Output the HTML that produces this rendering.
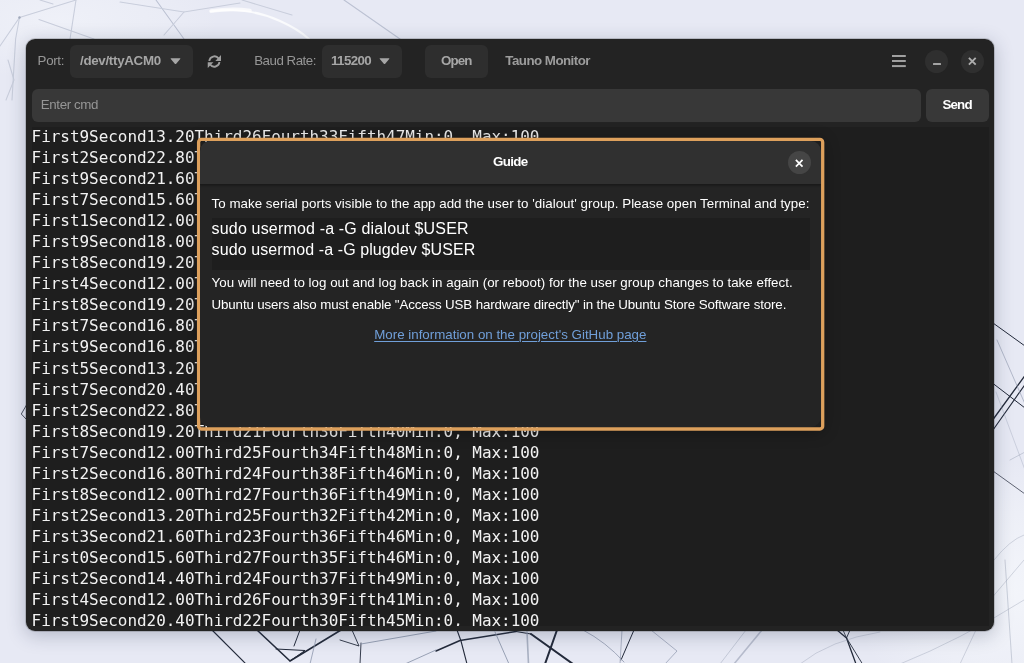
<!DOCTYPE html>
<html lang="en"><head><meta charset="utf-8"><title>Tauno Monitor</title>
<style>
html,body{margin:0;padding:0}
body{width:1024px;height:663px;overflow:hidden;position:relative;background:#e7e9f4;font-family:"Liberation Sans",sans-serif;font-size:13.33px;color:#fff}
#bg{position:absolute;left:0;top:0;width:1024px;height:663px}
#L{position:absolute;left:0;top:0;width:1024px;height:663px;will-change:transform}
#win{position:absolute;left:26px;top:39px;width:968px;height:592.4px;background:#232323;border-radius:9px;box-shadow:0 0 0 1px rgba(0,0,0,.16),0 4px 18px 1px rgba(40,50,85,.25)}
.t{position:absolute;white-space:pre;line-height:16px;height:16px}
.dim{color:#969696}
.btn{position:absolute;background:#2e2e2e;border-radius:6px}
.b{font-weight:700}
.hb{color:#a6a6a6}
svg.i{position:absolute;overflow:visible}
#tv{position:absolute;left:32px;top:127px;width:956.7px;height:498.6px;background:#1e1e1e;overflow:hidden;font-family:"DejaVu Sans Mono","Liberation Mono",monospace;font-size:16px;line-height:21.05px;color:#f2f2f2;letter-spacing:-0.045px}
#tv .in{position:absolute;left:-0.8px;top:-0.9px;transform:scaleY(1.04);transform-origin:0 0}
#tv .in div{white-space:pre;height:20.27px;line-height:20.27px}
#ring{position:absolute;left:199px;top:140px;width:623px;height:288px;border-radius:6px;box-shadow:0 2px 16px 2px rgba(0,0,0,.33)}
#dlg{position:absolute;left:200.2px;top:141px;width:620.6px;height:286.4px;background:#242424;border-radius:10px;overflow:hidden}
#dh{position:absolute;left:0;top:0;width:100%;height:43px;background:#303030;box-shadow:0 1px 0 #1a1a1a,0 2px 1.5px rgba(0,0,0,.25)}
.code{position:absolute;background:#1e1e1e}
.circ{position:absolute;border-radius:50%}
a{color:#709fd9;text-decoration:underline;text-decoration-thickness:1.4px;text-underline-offset:1.5px}

</style></head>
<body>
<svg id="bg" viewBox="0 0 1024 663">
<defs><filter id="bl" x="-5%" y="-5%" width="110%" height="110%"><feGaussianBlur stdDeviation="0.7"/></filter><radialGradient id="wb" cx="0.5" cy="0.5" r="0.5"><stop offset="0" stop-color="#f6f8fc" stop-opacity=".85"/><stop offset="0.6" stop-color="#f3f5fa" stop-opacity=".5"/><stop offset="1" stop-color="#f3f5fa" stop-opacity="0"/></radialGradient><radialGradient id="hl" cx="0.5" cy="0.5" r="0.5"><stop offset="0" stop-color="#fff" stop-opacity=".75"/><stop offset="1" stop-color="#fff" stop-opacity="0"/></radialGradient>
<linearGradient id="br" x1="0" y1="0" x2="1" y2="1"><stop offset="0" stop-color="#e7e9f4"/><stop offset="1" stop-color="#dfe4ee"/></linearGradient></defs>
<rect width="1024" height="663" fill="#e7e9f4"/>
<ellipse cx="1000" cy="590" rx="150" ry="130" fill="url(#wb)"/>
<ellipse cx="60" cy="20" rx="160" ry="60" fill="url(#wb)" opacity=".6"/>
<!-- top faint lines -->
<g fill="none" stroke="#c9cedc" stroke-width="1.1" stroke-linecap="round" filter="url(#bl)">
<path d="M19.5 17.5 L76 0"/><path d="M19.5 17.5 L15.6 39 L12 100"/><path d="M39 19.5 L94 39"/><path d="M76 0 L70 39"/><path d="M53 4 L40 0"/>
<path d="M156 0 L184 39" stroke="#bcc2d3"/><path d="M184 12 L164 35"/><path d="M120 2 L184 12 L240 3"/>
<path d="M344 0 L400 39" stroke="#bcc2d3"/><path d="M242 0 L292 15"/><path d="M0 46 L19.5 17.5"/><path d="M8 60 L14 80 L6 100"/>
</g>
<g filter="url(#bl)"><path d="M211 11.5 Q246 6 280 21 Q298 29 309 39" fill="none" stroke="#fff" stroke-width="2.2" opacity=".8" stroke-linecap="round"/>
<path d="M211 11 Q232 8 250 10.5" fill="none" stroke="#fff" stroke-width="3.6" opacity=".75" stroke-linecap="round"/></g>
<circle cx="19.5" cy="17.5" r="1.2" fill="#a0a8ba"/>
<!-- left tick -->
<path d="M26.5 405 L21.3 414 L26.5 419.5" fill="none" stroke="#232a3a" stroke-width="1" opacity=".8"/>
<!-- bottom dark lines -->
<g fill="none" stroke="#232a3a" stroke-linecap="round" stroke-linejoin="round">
<path d="M212 630 L246 664" stroke-width="1.1"/>
<path d="M257 630 L290 661 L341 630" stroke-width="1.6"/>
<path d="M276 649 L305 650.5 L290 661" stroke-width="1"/>
<path d="M300 630 L294 646" stroke-width="1"/>
<path d="M340 640 L359 646 L352 630" stroke-width="0.9"/>
<path d="M361 643 L360 664" stroke-width="0.9"/>
<path d="M436 651 L460 640.5 L516 631.5" stroke-width="1.5"/>
<path d="M457 630 L461 641 L467 664" stroke-width="1.1"/>
<path d="M516 631.5 L531 634" stroke-width="1.2"/>
<path d="M531 634 L573 664" stroke-width="2"/>
<path d="M557 630 L545 664" stroke-width="2"/>
<path d="M634 630 L621 660" stroke-width="1"/>
<path d="M837 630 L846.5 638 L856 664" stroke-width="1.3"/>
<path d="M850 630 L846.5 638 L862.5 664" stroke-width="0.9"/>
<path d="M843 630 L846.5 638" stroke-width="0.8"/>
</g>
<g fill="none" stroke="#8f98ad" stroke-linecap="round">
<path d="M316 639 L310 664" stroke-width="0.8"/>
<path d="M361 644 L436 631" stroke-width="0.9"/>
<path d="M405 664 L436 650" stroke-width="0.9"/>
<path d="M495 632 L509 664" stroke-width="0.9"/>
<path d="M527 632 L528.5 664" stroke-width="1.6" opacity=".7"/>
<path d="M583 630 Q606 642 624 662" stroke-width="0.8"/>
<path d="M622 630 L620 664" stroke-width="0.7"/>
<path d="M651 630 L677 651 L665 664" stroke-width="0.7"/>
<path d="M762 630 L734 664" stroke-width="1.6" opacity=".55"/>
<path d="M746 630 L720 664" stroke-width="1" opacity=".4"/>
<path d="M800 664 Q830 640 880 632" stroke-width="0.7" opacity=".5"/>
<path d="M900 664 Q960 640 1024 600" stroke-width="0.7" opacity=".5"/>
<path d="M960 664 L990 600 L1024 560" stroke-width="0.7" opacity=".5"/>
<path d="M1005 560 L1012 664" stroke-width="0.8" opacity=".5"/>
<path d="M994 560 Q1010 540 1024 535" stroke-width="0.7" opacity=".5"/>
</g>
<!-- right strip -->
<g fill="none" stroke="#232a3a" stroke-linecap="round">
<path d="M993 323 L1025 346" stroke-width="1"/>
<path d="M993 383.5 L1025 408" stroke-width="1"/>
<path d="M993 419.5 L1025 375.5" stroke-width="1.3"/>
<path d="M993 430 L1025 384.5" stroke-width="1.1"/>
<path d="M993 471 L1025 494" stroke-width="1" opacity=".7"/>
</g>
<g fill="none" stroke="#8f98ad" stroke-linecap="round">
<path d="M997 340 L1025 404" stroke-width="1" opacity=".6"/>
<path d="M996 392 L1025 470" stroke-width="0.8" opacity=".4"/>
<path d="M1010 460 L1025 452" stroke-width="0.8" opacity=".5"/>
</g>
</svg>
<div id="L">
<div id="win"></div>
<!-- header row -->
<span class="t dim" style="left:37.6px;top:52.6px;letter-spacing:-0.35px">Port:</span>
<div class="btn" style="left:70px;top:45px;width:122.5px;height:32.5px"></div>
<span class="t b hb" style="left:80px;top:52.6px;letter-spacing:-0.3px">/dev/ttyACM0</span>
<svg class="i" style="left:169.8px;top:58px" width="11" height="6.4" viewBox="0 0 11 6.4"><path d="M1.1 0.3 H9.9 Q10.9 0.3 10.2 1.1 L6.2 5.7 Q5.5 6.4 4.8 5.7 L0.8 1.1 Q0.1 0.3 1.1 0.3Z" fill="#a6a6a6"/></svg>
<svg class="i" style="left:200px;top:48px" width="30" height="28" viewBox="0 0 710 663"><g fill="none" stroke="#9e9e9e" stroke-width="44"><path d="M220 308 A122 122 0 0 1 440 248"/><path d="M460 332 A122 122 0 0 1 240 392"/></g><path d="M497 168 V305 H362Z" fill="#9e9e9e"/><path d="M183 472 V335 H318Z" fill="#9e9e9e"/></svg>
<span class="t dim" style="left:254.2px;top:52.6px;letter-spacing:-0.5px">Baud Rate:</span>
<div class="btn" style="left:321.7px;top:45px;width:80.3px;height:32.5px"></div>
<span class="t b hb" style="left:331px;top:52.6px;letter-spacing:-0.6px">115200</span>
<svg class="i" style="left:379.4px;top:58px" width="11" height="6.4" viewBox="0 0 11 6.4"><path d="M1.1 0.3 H9.9 Q10.9 0.3 10.2 1.1 L6.2 5.7 Q5.5 6.4 4.8 5.7 L0.8 1.1 Q0.1 0.3 1.1 0.3Z" fill="#a6a6a6"/></svg>
<div class="btn" style="left:425px;top:45px;width:63px;height:32.5px"></div>
<span class="t b hb" style="left:441px;top:52.6px;letter-spacing:-0.9px">Open</span>
<span class="t b" style="left:505.3px;top:52.6px;letter-spacing:-0.53px;color:#9c9c9c">Tauno Monitor</span>
<svg class="i" style="left:891.8px;top:55px" width="13.8" height="12.2" viewBox="0 0 13.8 12.2"><g fill="#a0a0a0"><rect x="0" y="0" width="13.8" height="2"/><rect x="0" y="5" width="13.8" height="2"/><rect x="0" y="10.1" width="13.8" height="2"/></g></svg>
<div class="circ" style="left:925.2px;top:49.8px;width:23px;height:23px;background:#2f2f2f"></div>
<div style="position:absolute;left:933.1px;top:62.6px;width:8px;height:2.2px;background:#a4a4a4;border-radius:.5px"></div>
<div class="circ" style="left:961px;top:49.8px;width:23px;height:23px;background:#2f2f2f"></div>
<svg class="i" style="left:967.8px;top:57px" width="8.6" height="8.6" viewBox="0 0 8.6 8.6"><path d="M.9 .9 L7.7 7.7 M7.7 .9 L.9 7.7" stroke="#adadad" stroke-width="1.9" stroke-linecap="butt" fill="none"/></svg>
<!-- entry row -->
<div class="btn" style="left:31.7px;top:89px;width:889px;height:32.6px;background:#383838"></div>
<span class="t dim" style="left:40.8px;top:96.5px;letter-spacing:-0.38px">Enter cmd</span>
<div class="btn" style="left:926.2px;top:89px;width:62.5px;height:32.6px;background:#383838"></div>
<span class="t b" style="left:942.4px;top:96.5px;letter-spacing:-0.8px">Send</span>
<div id="tv">
<svg width="957" height="499" style="position:absolute;left:0;top:0"><g transform="scale(1,1.04)" fill="#f2f2f2" font-family="DejaVu Sans Mono, Liberation Mono, monospace" font-size="16" letter-spacing="-0.045" style="white-space:pre">
<text x="-0.4" y="14.42">First9Second13.20Third26Fourth33Fifth47Min:0, Max:100</text>
<text x="-0.4" y="34.66">First2Second22.80Third27Fourth36Fifth44Min:0, Max:100</text>
<text x="-0.4" y="54.90">First9Second21.60Third23Fourth31Fifth45Min:0, Max:100</text>
<text x="-0.4" y="75.14">First7Second15.60Third25Fourth38Fifth42Min:0, Max:100</text>
<text x="-0.4" y="95.38">First1Second12.00Third22Fourth34Fifth48Min:0, Max:100</text>
<text x="-0.4" y="115.62">First9Second18.00Third28Fourth37Fifth41Min:0, Max:100</text>
<text x="-0.4" y="135.87">First8Second19.20Third24Fourth32Fifth46Min:0, Max:100</text>
<text x="-0.4" y="156.11">First4Second12.00Third26Fourth35Fifth43Min:0, Max:100</text>
<text x="-0.4" y="176.35">First8Second19.20Third21Fourth39Fifth47Min:0, Max:100</text>
<text x="-0.4" y="196.59">First7Second16.80Third29Fourth33Fifth40Min:0, Max:100</text>
<text x="-0.4" y="216.83">First9Second16.80Third25Fourth30Fifth49Min:0, Max:100</text>
<text x="-0.4" y="237.07">First5Second13.20Third23Fourth36Fifth44Min:0, Max:100</text>
<text x="-0.4" y="257.31">First7Second20.40Third27Fourth31Fifth42Min:0, Max:100</text>
<text x="-0.4" y="277.55">First2Second22.80Third22Fourth38Fifth45Min:0, Max:100</text>
<text x="-0.4" y="297.79">First8Second19.20Third21Fourth36Fifth40Min:0, Max:100</text>
<text x="-0.4" y="318.03">First7Second12.00Third25Fourth34Fifth48Min:0, Max:100</text>
<text x="-0.4" y="338.27">First2Second16.80Third24Fourth38Fifth46Min:0, Max:100</text>
<text x="-0.4" y="358.51">First8Second12.00Third27Fourth36Fifth49Min:0, Max:100</text>
<text x="-0.4" y="378.75">First2Second13.20Third25Fourth32Fifth42Min:0, Max:100</text>
<text x="-0.4" y="398.99">First3Second21.60Third23Fourth36Fifth46Min:0, Max:100</text>
<text x="-0.4" y="419.23">First0Second15.60Third27Fourth35Fifth46Min:0, Max:100</text>
<text x="-0.4" y="439.47">First2Second14.40Third24Fourth37Fifth49Min:0, Max:100</text>
<text x="-0.4" y="459.71">First4Second12.00Third26Fourth39Fifth41Min:0, Max:100</text>
<text x="-0.4" y="479.95">First9Second20.40Third22Fourth30Fifth45Min:0, Max:100</text>
</g></svg>
</div>
<!-- dialog -->
<div id="ring"></div>
<svg class="i" style="left:190px;top:130px" width="650" height="310" viewBox="190 130 650 310"><rect x="198.6" y="139.4" width="624.1" height="289.6" rx="2.8" fill="none" stroke="#dda05c" stroke-width="3.3"/></svg>
<div id="dlg">
  <div id="dh"></div>
</div>
<span class="t b" style="left:493px;top:154px;letter-spacing:-0.65px">Guide</span>
<div class="circ" style="left:787.6px;top:151px;width:23px;height:23px;background:#454545"></div>
<svg class="i" style="left:794.9px;top:158.7px" width="8.4" height="8.4" viewBox="0 0 8.6 8.6"><path d="M.9 .9 L7.7 7.7 M7.7 .9 L.9 7.7" stroke="#fff" stroke-width="1.8" fill="none"/></svg>
<span class="t" style="left:211.6px;top:196px;letter-spacing:0.024px">To make serial ports visible to the app add the user to 'dialout' group. Please open Terminal and type:</span>
<div class="code" style="left:211.6px;top:218px;width:598.2px;height:52px"></div>
<span class="t" style="left:211.6px;top:218.5px;font-size:16px;line-height:20px;letter-spacing:0.17px">sudo usermod -a -G dialout $USER</span>
<span class="t" style="left:211.6px;top:239.6px;font-size:16px;line-height:20px;letter-spacing:0.1px">sudo usermod -a -G plugdev $USER</span>
<span class="t" style="left:211.6px;top:275px;letter-spacing:0.024px">You will need to log out and log back in again (or reboot) for the user group changes to take effect.</span>
<span class="t" style="left:211.6px;top:297px;letter-spacing:-0.14px">Ubuntu users also must enable "Access USB hardware directly" in the Ubuntu Store Software store.</span>
<span class="t" style="left:374.2px;top:326.8px"><a>More information on the project's GitHub page</a></span>
</div>

</body></html>
